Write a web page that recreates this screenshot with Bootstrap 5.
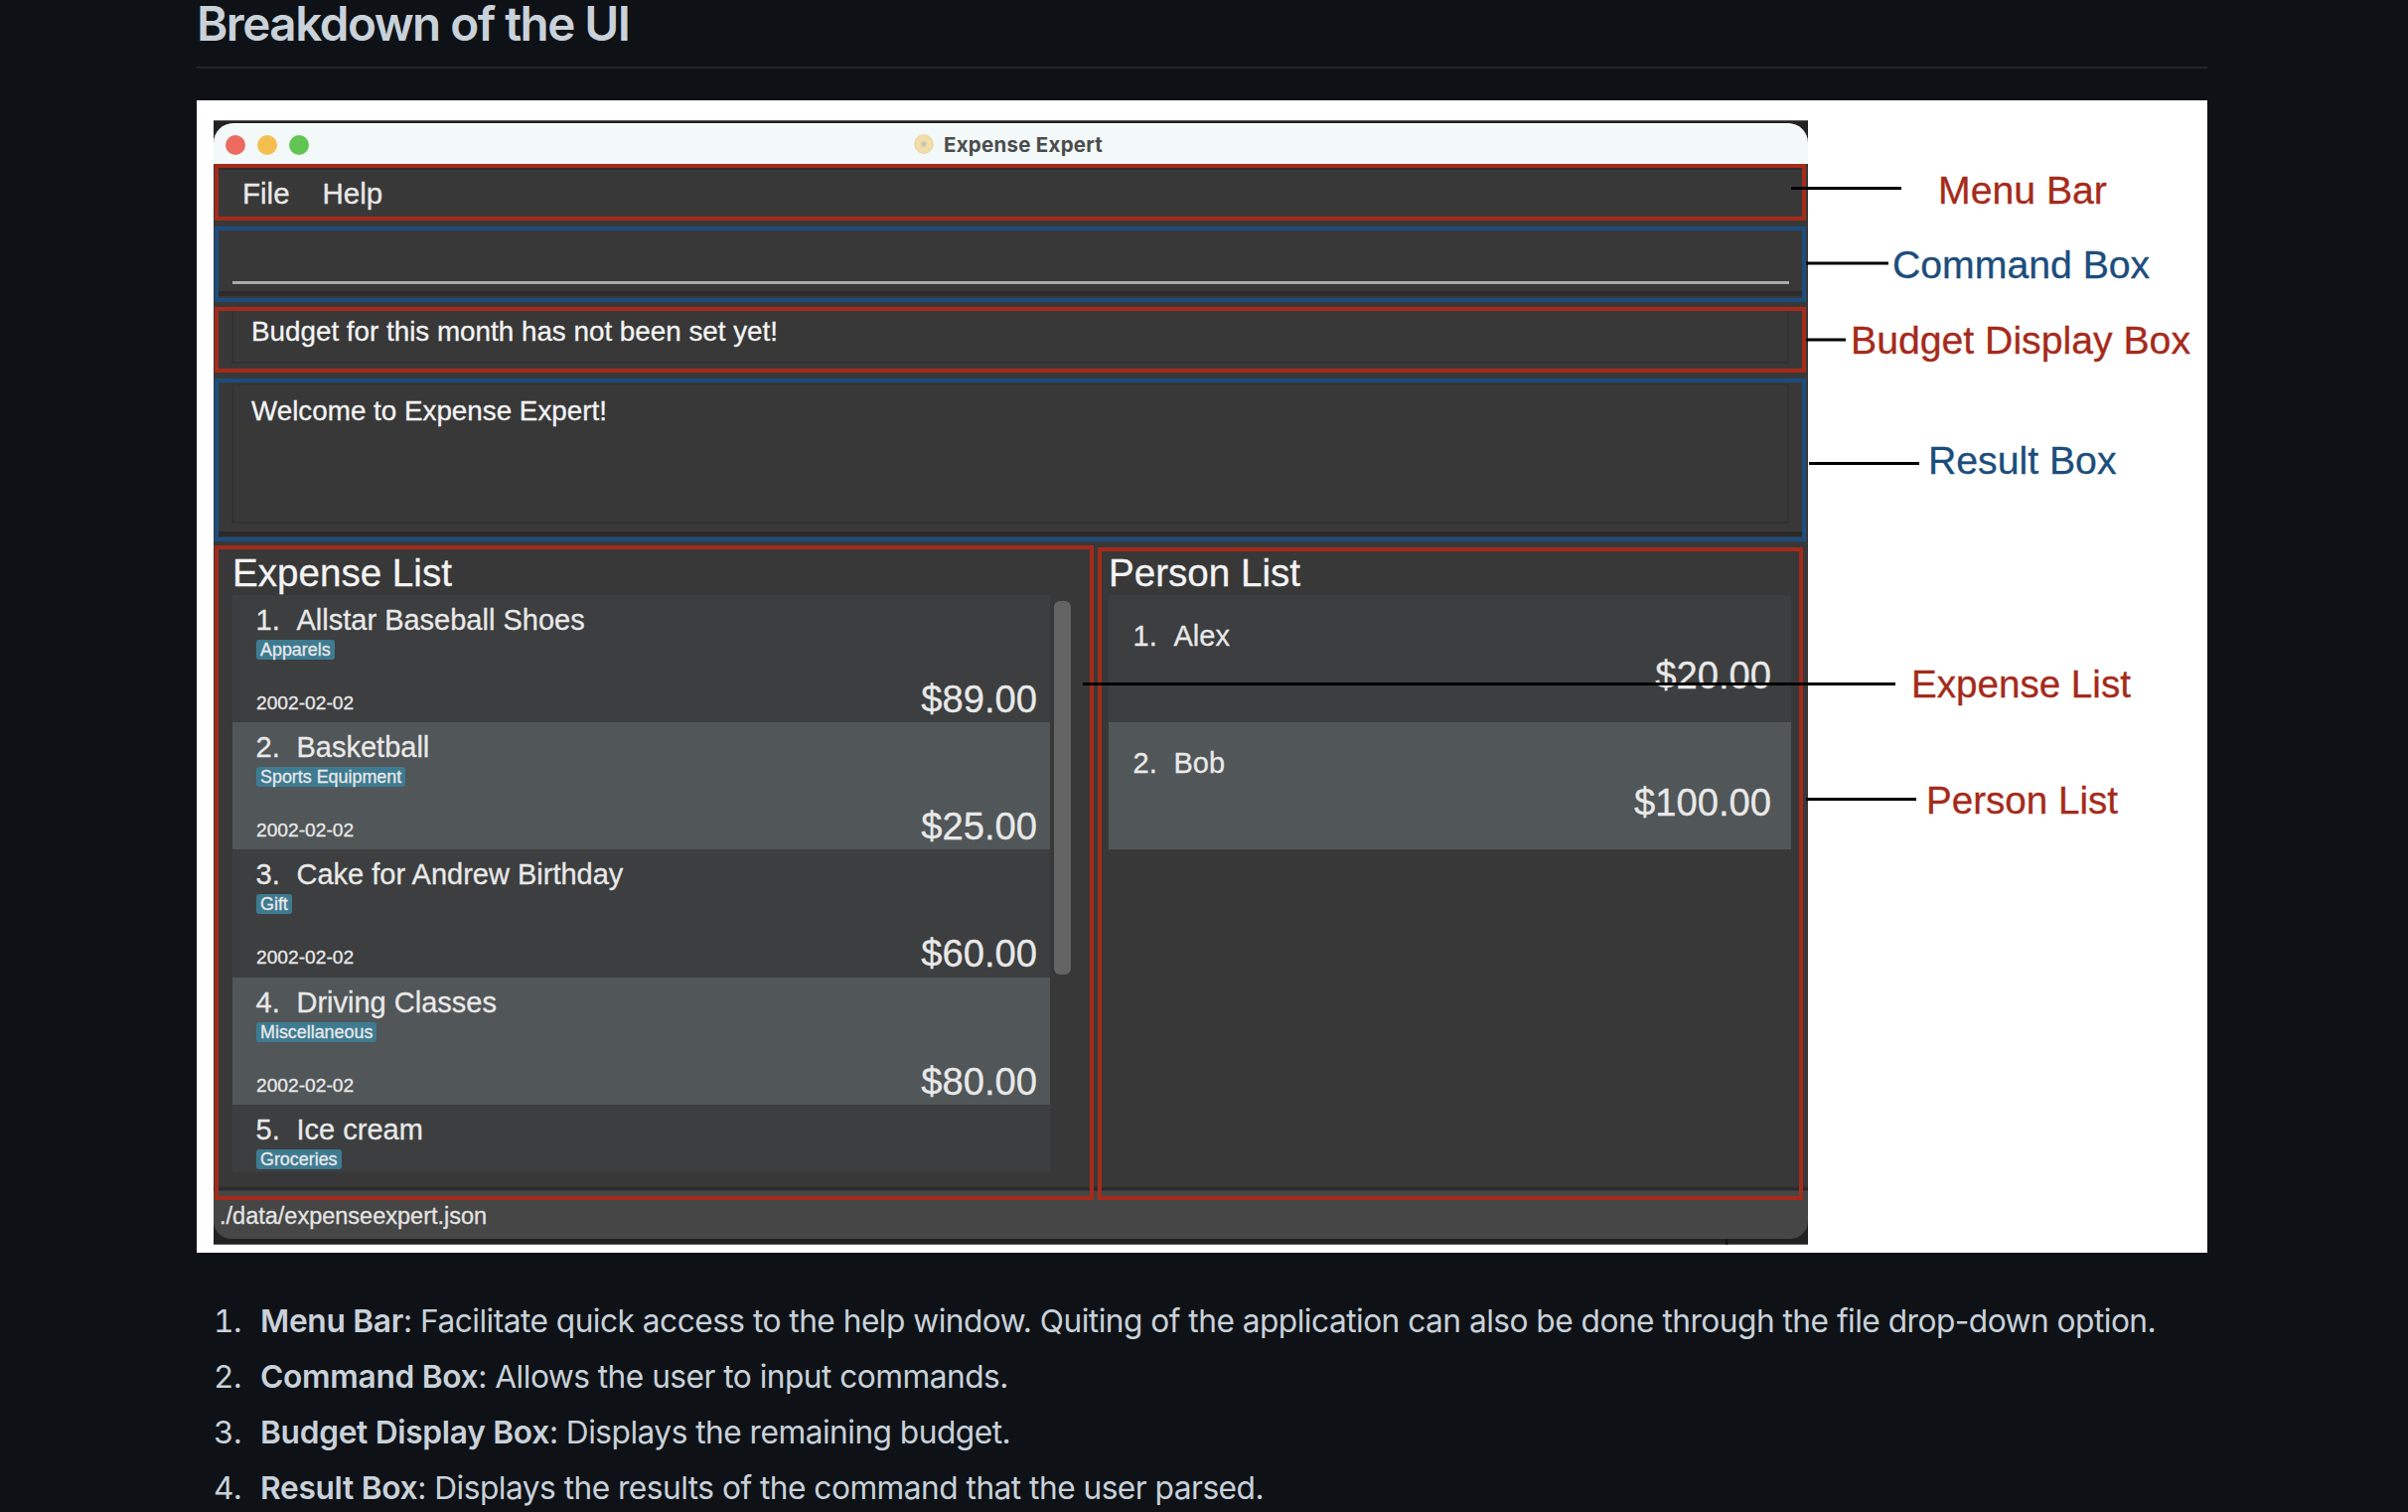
<!DOCTYPE html>
<html lang="en">
<head>
<meta charset="utf-8">
<title>Breakdown of the UI</title>
<link href="https://cdn.jsdelivr.net/npm/bootstrap@5.3.0/dist/css/bootstrap.min.css" rel="stylesheet">
<style>
body{background:#0e1217;color:#c9d1d9;font-family:Inter,sans-serif;height:1522px;overflow:hidden}
.doc{width:2024px;margin-left:198px}
.doc-title{height:69px;border-bottom:2px solid #21262d;font-size:47.6px;font-weight:600;line-height:48px;letter-spacing:-1.5px;white-space:nowrap}
.figure-box{margin-top:32px;height:1160px;padding:20px 0 0 17px;background:#fff;font-family:"Liberation Sans",Arial,sans-serif}
.frame{width:1605px;height:1132px;background:#222;border:1px solid #555;border-width:1px 0;padding-top:2px}
.title-strip{height:41px;background:#f3f9f8;border-radius:20px 20px 0 0;border-top:1px solid #fff;padding:1px 0 0 12px}
.dot{width:20px;height:20px;border-radius:50%}
.dot-close{background:#ed6a5e}
.dot-min{background:#f5bf4f}
.dot-max{background:#61c554}
.dots{gap:12px}
.win-label{margin-left:608px;gap:9px}
.win-name{font:700 20.5px/24px Inter,sans-serif;color:#4b4d4d;letter-spacing:.25px}
.win-body{height:1082px;border-radius:0 0 18px 18px;padding:0 2px 0 1px;background:linear-gradient(#383838 0 1029px,#2a2a2a 1031px 1033px,#464646 1034px);color:#e9e9e9;-webkit-text-stroke:.3px}
.mark-red,.mark-blue{border:4px solid #a52a1a}
.mark-blue{border-color:#1c4d7c}
.menu-strip{height:57px;font-size:29.5px;line-height:38px;padding:7px 24px 3px;gap:33px;box-shadow:inset 0 2px #2c2c2c}
.command{height:76px;margin-top:6px;padding:0 13px 0 14px;box-shadow:inset 0 -2px #383838,inset 0 -7px #2c2c2c}
.command-line{height:54px;border-bottom:3px solid #a9aaa9}
.budget{height:66px;margin-top:5px;padding:0 13px 0 13px}
.result{height:164px;margin-top:6px;padding:1px 13px 0 13px;box-shadow:inset 0 -1px #383838,inset 0 -6px #2a2a2a}
.readout{border:2px solid #313131;border-top:0;font-size:27.8px;line-height:32px;color:#f4f4f4;padding-left:18px}
.budget .readout{height:53px;padding-top:5px}
.result .readout{height:141px;padding-top:10px;border-top:2px solid #333}
.panes{margin-top:4px;height:659px}
.pane-exp{width:885px;padding:0 0 0 14px}
.pane-per{width:710px;margin:2px 0 0 4px;padding:0 8px 0 7px}
.pane-title{height:46px;font-size:38.6px;line-height:46px;color:#f4f4f4;padding-top:1px}
.pane-per .pane-title{height:44px;padding:0;line-height:44px}
.rows{width:823px;height:581px;overflow:hidden}
.entry{height:128.2px;background:#3c3e3f;padding:0 13px 0 24px}
.entry:nth-child(even){background:#515658}
.entry-name{font-size:29px;line-height:32px;padding-top:9px;display:flex}
.entry-name span{width:41px;margin-left:-.5px}
.chip{font-size:17.9px;line-height:20px;height:20px;padding:0 4px;background:#3e7b91;border-radius:3px;width:max-content;margin-top:4px}
.entry-foot{height:54px;margin-top:6px}
.when{font-size:19.2px;line-height:24px;padding-top:26px}
.amount{font-size:38.2px;line-height:44px}
.entry-foot .amount{padding-top:12px}
.pane-per .entry{padding:0 20px 0 25px}
.pane-per .entry-name{padding-top:25px;height:59px}
.thumb{width:17px;height:376px;border-radius:6px;background:#636363;margin:6px 0 0 4px}
.status{font-size:23.5px;line-height:30px;padding:1px 0 0 5px;color:#e4e4e4}
.note{position:absolute;font-size:39.2px;line-height:42px;white-space:nowrap;color:#a52a1a;-webkit-text-stroke:.3px}
.note.blue{color:#1c4d7c}
.note.compact{font-size:38.6px}
.leader{position:absolute;inset:0;width:2024px;height:1160px}
.doc-list{margin:45px 0 0;padding:0 0 0 17px;font-size:31.7px;line-height:48px;letter-spacing:-.53px;white-space:nowrap;list-style:none;counter-reset:step}
.doc-list li{margin-bottom:8px;display:flex}
.doc-list li::before{counter-increment:step;content:counter(step) ".";width:28px;margin-right:19px;text-align:right;font-variant-numeric:tabular-nums}
.doc-list b{font-weight:600;letter-spacing:-.3px}
</style>
</head>
<body>
<main class="doc">
<h1 class="doc-title m-0">Breakdown of the UI</h1>
<figure class="figure-box position-relative mb-0">
<div class="frame">
<div class="title-strip d-flex align-items-center">
<div class="dots d-flex"><i class="dot dot-close"></i><i class="dot dot-min"></i><i class="dot dot-max"></i></div>
<div class="win-label d-flex align-items-center"><svg width="22" height="22" viewBox="0 0 22 22"><circle cx="11" cy="10" r="9.3" fill="#f3dda8" stroke="#e3d3aa"/><circle cx="11" cy="10" r="3" fill="#d3cdb4"/><circle cx="11" cy="10" r="1.2" fill="#b3bcc0"/></svg><span class="win-name">Expense Expert</span></div>
</div>
<div class="win-body">
<nav class="menu-strip mark-red d-flex"><span>File</span><span>Help</span></nav>
<div class="command mark-blue"><div class="command-line"></div></div>
<div class="budget mark-red"><div class="readout">Budget for this month has not been set yet!</div></div>
<div class="result mark-blue"><div class="readout">Welcome to Expense Expert!</div></div>
<div class="panes d-flex">
<section class="pane-exp mark-red">
<div class="pane-title">Expense List</div>
<div class="d-flex">
<div class="rows">
<div class="entry"><div class="entry-name"><span>1.</span>Allstar Baseball Shoes</div><div class="chip">Apparels</div><div class="entry-foot d-flex justify-content-between"><div class="when">2002-02-02</div><div class="amount">$89.00</div></div></div>
<div class="entry"><div class="entry-name"><span>2.</span>Basketball</div><div class="chip">Sports Equipment</div><div class="entry-foot d-flex justify-content-between"><div class="when">2002-02-02</div><div class="amount">$25.00</div></div></div>
<div class="entry"><div class="entry-name"><span>3.</span>Cake for Andrew Birthday</div><div class="chip">Gift</div><div class="entry-foot d-flex justify-content-between"><div class="when">2002-02-02</div><div class="amount">$60.00</div></div></div>
<div class="entry"><div class="entry-name"><span>4.</span>Driving Classes</div><div class="chip">Miscellaneous</div><div class="entry-foot d-flex justify-content-between"><div class="when">2002-02-02</div><div class="amount">$80.00</div></div></div>
<div class="entry"><div class="entry-name"><span>5.</span>Ice cream</div><div class="chip">Groceries</div></div>
</div>
<div class="thumb"></div>
</div>
</section>
<section class="pane-per mark-red">
<div class="pane-title">Person List</div>
<div>
<div class="entry"><div class="entry-name"><span>1.</span>Alex</div><div class="amount text-end">$20.00</div></div>
<div class="entry"><div class="entry-name"><span>2.</span>Bob</div><div class="amount text-end">$100.00</div></div>
</div>
</section>
</div>
<div class="status">./data/expenseexpert.json</div>
</div>
</div>
<svg class="leader" viewBox="198 101 2024 1160" stroke="#000" stroke-width="3"><path d="M1803 189.5H1914M1818 265H1901M1818 342H1858M1821 466.5H1932M1090 688.5H1908M1818 804.5H1929"/><path d="M1738 1247v6" stroke="#111" stroke-width="2"/></svg>
<span class="note" style="left:1753px;top:70px">Menu Bar</span>
<span class="note blue" style="left:1707px;top:145px">Command Box</span>
<span class="note" style="left:1665px;top:221px">Budget Display Box</span>
<span class="note blue" style="left:1743px;top:342px">Result Box</span>
<span class="note compact" style="left:1726px;top:567px">Expense List</span>
<span class="note compact" style="left:1741px;top:684px">Person List</span>
</figure>
<ol class="doc-list">
<li><div><b>Menu Bar</b>: Facilitate quick access to the help window. Quiting of the application can also be done through the file drop-down option.</div></li>
<li><div><b>Command Box</b>: Allows the user to input commands.</div></li>
<li><div><b>Budget Display Box</b>: Displays the remaining budget.</div></li>
<li><div><b>Result Box</b>: Displays the results of the command that the user parsed.</div></li>
</ol>
</main>
<script src="https://cdn.jsdelivr.net/npm/bootstrap@5.3.0/dist/js/bootstrap.bundle.min.js"></script>
</body>
</html>
